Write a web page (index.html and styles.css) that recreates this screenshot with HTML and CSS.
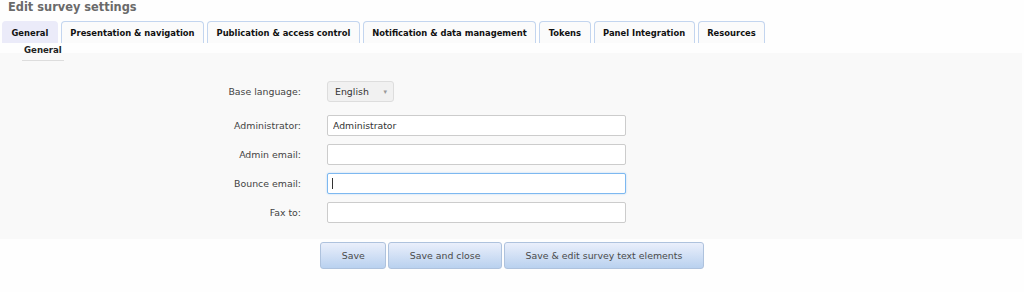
FILE: index.html
```html
<!DOCTYPE html>
<html lang="en">
<head>
  <meta charset="UTF-8">
  <title>Edit survey settings</title>
  <link rel="stylesheet" href="styles.css">
</head>
<body>

<div class="page-title">Edit survey settings</div>

<ul class="tabs">
  <li class="tab active">General</li>
  <li class="tab">Presentation &amp; navigation</li>
  <li class="tab">Publication &amp; access control</li>
  <li class="tab">Notification &amp; data management</li>
  <li class="tab">Tokens</li>
  <li class="tab">Panel Integration</li>
  <li class="tab">Resources</li>
</ul>

<div class="subtabs">
  <span class="subtab">General</span>
</div>

<div class="panel">
  <div class="form-grid">
    <label class="form-label">Base language:</label>
    <div class="field-select">
      <div class="fake-select">English <span class="select-arrow">&#9662;</span></div>
    </div>

    <label class="form-label gap-top" for="admin">Administrator:</label>
    <div class="field gap-top">
      <input type="text" id="admin" class="text-field" value="Administrator">
    </div>

    <label class="form-label" for="adminemail">Admin email:</label>
    <div class="field">
      <input type="text" id="adminemail" class="text-field">
    </div>

    <label class="form-label" for="bounceemail">Bounce email:</label>
    <div class="field caret-wrap">
      <input type="text" id="bounceemail" class="text-field focused">
      <span class="caret"></span>
    </div>

    <label class="form-label" for="faxto">Fax to:</label>
    <div class="field">
      <input type="text" id="faxto" class="text-field">
    </div>
  </div>
</div>

<div class="button-row">
  <button class="action-button">Save</button>
  <button class="action-button">Save and close</button>
  <button class="action-button wide">Save &amp; edit survey text elements</button>
</div>

</body>
</html>
```

FILE: styles.css
```css
body {
  margin: 0;
  background-color: #fefefe;
  font-family: 'DejaVu Sans', Verdana, sans-serif;
  font-size: 9.4px;
  color: #333333;
}

.page-title {
  height: 21px;
  padding-left: 8px;
  font-size: 11.4px;
  font-weight: bold;
  color: #6a6a6a;
  line-height: 14px;
}

.tabs {
  display: flex;
  gap: 3px;
  margin: 0;
  padding: 0 0 0 2px;
  list-style: none;
}

.tab {
  height: 21px;
  padding: 0 8.5px;
  line-height: 22px;
  font-size: 8.4px;
  font-weight: bold;
  color: #111111;
  background-color: #fbfbfb;
  border: 1px solid #c3d5ef;
  border-bottom: none;
  border-radius: 4px 4px 0 0;
}

.tab.active {
  background-color: #ebebf9;
  border-color: #ebebf9;
}

.subtabs {
  height: 10px;
  padding-left: 22px;
}

.subtab {
  display: inline-block;
  position: relative;
  padding: 2px 2px 5px 2px;
  font-size: 8.6px;
  font-weight: bold;
  color: #222222;
  border-bottom: 1px solid #dddddd;
}

.panel {
  margin-right: 2px;
  padding: 28px 0 16px 0;
  background-color: #f9f9f9;
}

.form-grid {
  display: grid;
  grid-template-columns: 301px 298px;
  column-gap: 26px;
  row-gap: 8px;
  align-items: center;
}

.form-label {
  text-align: right;
  color: #444444;
}

.gap-top {
  margin-top: 5px;
}

.fake-select {
  display: inline-flex;
  align-items: center;
  justify-content: space-between;
  box-sizing: border-box;
  width: 67px;
  height: 21px;
  padding: 0 6px 0 7px;
  background-color: #f1f1f1;
  border: 1px solid #dddddd;
  border-radius: 3px;
  color: #333333;
}

.select-arrow {
  font-size: 7px;
  color: #999999;
}

.text-field {
  display: block;
  box-sizing: border-box;
  width: 299px;
  height: 21px;
  margin: 0;
  padding: 0 5px;
  font-family: 'DejaVu Sans', Verdana, sans-serif;
  font-size: 9.3px;
  color: #333333;
  background-color: white;
  border: 1px solid #cccccc;
  border-radius: 2px;
  outline: none;
}

.text-field.focused {
  border-color: #7db8f0;
  box-shadow: 0 0 2px #b3d5f6;
}

.caret-wrap {
  position: relative;
}

.caret {
  position: absolute;
  left: 5px;
  top: 5px;
  width: 1px;
  height: 11px;
  background-color: #333333;
}

.button-row {
  display: flex;
  justify-content: center;
  gap: 2px;
  margin-top: 3px;
}

.action-button {
  height: 27px;
  padding: 0 20.5px;
  font-family: 'DejaVu Sans', Verdana, sans-serif;
  font-size: 9.4px;
  color: #4a4a4a;
  background: linear-gradient(#eaeffb, #b9d1ef);
  border: 1px solid #aec2dd;
  border-radius: 3px;
  cursor: pointer;
}

.action-button:hover {
  background: linear-gradient(#f2f5fc, #c7daf2);
}
```
